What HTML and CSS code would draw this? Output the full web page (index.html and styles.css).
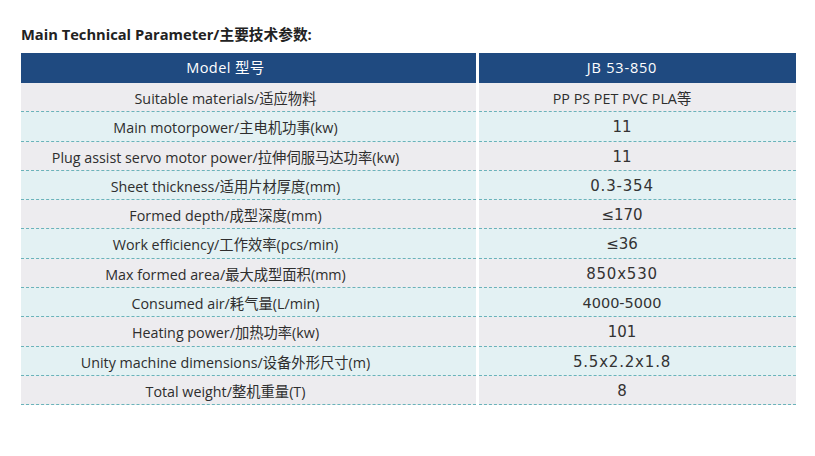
FILE: index.html
```html
<!DOCTYPE html>
<html lang="zh">
<head>
<meta charset="utf-8">
<title>Main Technical Parameter</title>
<link rel="stylesheet" href="styles.css">
</head>
<body>
<div class="page">
  <h2 class="title">Main Technical Parameter/主要技术参数:</h2>
  <div class="table">
    <div class="cell label head">Model 型号</div>
    <div class="cell value head mono-head">JB 53-850</div>

    <div class="cell label odd">Suitable materials/适应物料</div>
    <div class="cell value odd">PP PS PET PVC PLA等</div>

    <div class="cell label even">Main motorpower/主电机功事(kw)</div>
    <div class="cell value even num">11</div>

    <div class="cell label odd">Plug assist servo motor power/拉伸伺服马达功率(kw)</div>
    <div class="cell value odd num">11</div>

    <div class="cell label even">Sheet thickness/适用片材厚度(mm)</div>
    <div class="cell value even num spaced">0.3-354</div>

    <div class="cell label odd">Formed depth/成型深度(mm)</div>
    <div class="cell value odd num">≤170</div>

    <div class="cell label even">Work efficiency/工作效率(pcs/min)</div>
    <div class="cell value even num">≤36</div>

    <div class="cell label odd">Max formed area/最大成型面积(mm)</div>
    <div class="cell value odd num spaced">850x530</div>

    <div class="cell label even">Consumed air/耗气量(L/min)</div>
    <div class="cell value even num tight">4000-5000</div>

    <div class="cell label odd">Heating power/加热功率(kw)</div>
    <div class="cell value odd num">101</div>

    <div class="cell label even">Unity machine dimensions/设备外形尺寸(m)</div>
    <div class="cell value even num spaced">5.5x2.2x1.8</div>

    <div class="cell label odd">Total weight/整机重量(T)</div>
    <div class="cell value odd num">8</div>
  </div>
</div>
</body>
</html>
```

FILE: styles.css
```css
html, body {
  margin: 0;
  padding: 0;
  background: #ffffff;
}

.page {
  padding: 27px 0 0 21px;
  width: 775px;
  font-family: "Open Sans", "Noto Sans CJK SC", sans-serif;
  color: #2e2e2e;
}

.title {
  margin: 0 0 11px 0;
  font-size: 14.7px;
  line-height: 15px;
  font-weight: 700;
  color: #222;
}

.table {
  display: grid;
  grid-template-columns: 455px 317px;
  column-gap: 3px;
}

.cell {
  box-sizing: border-box;
  height: 29.3px;
  padding-top: 2px;
  line-height: 27px;
  text-align: center;
  font-size: 14.3px;
  border-bottom: 1px dashed #6ab3ba;
  white-space: nowrap;
}

.label {
  padding-right: 46px;
}

.value {
  padding-right: 31px;
}

.head {
  background: #1f4a80;
  color: #ffffff;
  border-bottom: none;
  height: 30px;
  padding-top: 0;
  line-height: 30px;
  font-size: 14.5px;
  letter-spacing: 0.4px;
}

.mono-head {
  letter-spacing: 0.8px;
}

.odd {
  background: #edecef;
}

.even {
  background: #e3f1f3;
}

.num {
  font-family: "DejaVu Sans", sans-serif;
  font-size: 15px;
  color: #333;
}

.spaced {
  letter-spacing: 0.8px;
}

.tight {
  font-size: 14.5px;
}
```
